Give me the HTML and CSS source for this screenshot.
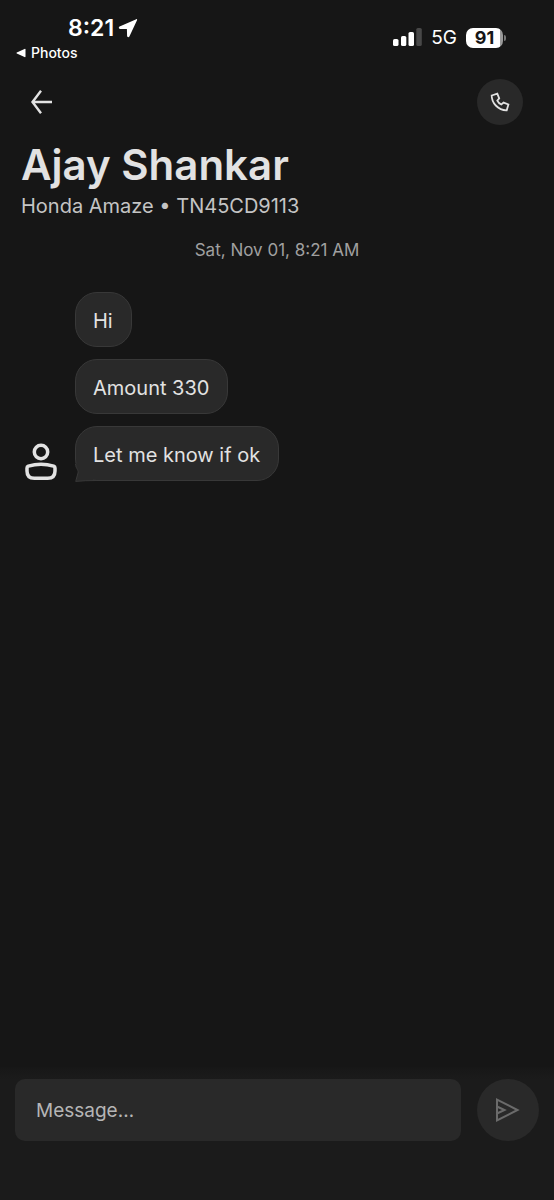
FILE: index.html
```html
<!DOCTYPE html>
<html lang="en">
<head>
<meta charset="utf-8">
<meta name="viewport" content="width=device-width, initial-scale=1">
<title>Ajay Shankar</title>
<link rel="stylesheet" href="styles.css">
</head>
<body>
<div class="app">
  <div class="status">
    <div class="status-left">
      <div class="clock">
        <span>8:21</span>
        <svg width="20" height="20" viewBox="0 0 20 20" aria-hidden="true"><path d="M18.300 1.200 1.600 8.500c-1.200.6-.9 2.300.4 2.400l6.900.2.200 6.900c.1 1.300 1.700 1.600 2.300.4L19 2.200c.3-.7 0-1.300-.7-1z" fill="#fff"/></svg>
      </div>
      <a class="back-app" href="#">
        <svg width="10" height="10" viewBox="0 0 10 10" aria-hidden="true"><path d="M.8 4.500 8.500.900q1-.400 1 .500v7.200q0 .900-1 .500L.8 5.500q-.8-.500 0-1z" fill="#fff"/></svg>
        <span>Photos</span>
      </a>
    </div>
    <div class="status-right">
      <svg width="30" height="20" viewBox="0 0 30 20" aria-hidden="true">
        <rect x="0" y="11" width="5.500" height="7" rx="1.600" fill="#fff"/>
        <rect x="8" y="8" width="5.300" height="10" rx="1.600" fill="#fff"/>
        <rect x="15.500" y="4" width="5.500" height="14" rx="1.600" fill="#fff"/>
        <rect x="23.300" y="0" width="5.500" height="18" rx="1.600" fill="#484848"/>
      </svg>
      <span class="network">5G</span>
      <span class="battery"><span class="charge">91</span></span>
    </div>
  </div>

  <header class="header">
    <div class="toolbar">
      <button class="icon-button" type="button" aria-label="Back">
        <svg width="24" height="26" viewBox="0 0 24 26" fill="none" stroke="#e2e2e2" stroke-width="2.400" aria-hidden="true"><path d="M22 13H2.500M11 1.800 2.500 13 11 24.200"/></svg>
      </button>
      <button class="icon-button call" type="button" aria-label="Call">
        <svg width="20" height="20" viewBox="0 0 20 20" fill="none" stroke="#e2e2e2" stroke-width="1.800" aria-hidden="true"><path d="M1.700 3.500 7.300 1.700l1.900 4.600-1.900 2.300c.8 1.700 2.200 3.100 4 3.900l2.300-1.900 4.800 1.900-1.700 5.800c-4 .1-7.900-1.700-10.900-4.800C3.200 10.800 1.700 7.300 1.700 3.500z"/></svg>
      </button>
    </div>
    <h1 class="name">Ajay Shankar</h1>
    <p class="vehicle">Honda Amaze • TN45CD9113</p>
  </header>

  <main class="thread">
    <time class="date">Sat, Nov 01, 8:21 AM</time>
    <div class="group">
      <svg class="avatar" width="32" height="38" viewBox="0 0 32 38" fill="none" stroke="#e2e2e2" stroke-width="3.500" aria-label="Driver" role="img"><circle cx="16" cy="9" r="6.700"/><path d="M2 25v3q0 7.300 7.300 7.300h13.400Q30 35.300 30 28v-3q0-1.300-1.300-1.800Q16 19.300 3.300 23.200 2 23.700 2 25z"/></svg>
      <div class="messages">
        <p class="bubble">Hi</p>
        <p class="bubble">Amount 330</p>
        <p class="bubble last">Let me know if ok
          <svg class="tail" width="24" height="18" viewBox="0 0 24 18" aria-hidden="true"><path d="M1 0C2 5 4 6 3 9L.700 17.400 18 16.500V0z" fill="#292929"/><path d="M.5 0C.8 5 4 6 3 9L.700 17.400Q9 16.500 22 16.500" fill="none" stroke="#383838"/></svg>
        </p>
      </div>
    </div>
  </main>

  <form class="composer">
    <input class="field" type="text" placeholder="Message…" aria-label="Message">
    <button class="send" type="button" aria-label="Send">
      <svg width="26" height="26" viewBox="0 0 26 26" fill="none" stroke="#6b6b6b" stroke-width="2" aria-hidden="true"><path d="M2 2.700 22.500 13 2 23.300zM2 9.500 9.500 13 2 16.500"/></svg>
    </button>
  </form>
</div>
</body>
</html>
```
FILE: styles.css
```css
* { box-sizing: border-box; }
body {
  margin: 0;
  background: #161616;
  color: #e2e2e2;
  font-family: "Inter", "Liberation Sans", sans-serif;
}
h1, p { margin: 0; }
button, input { font: inherit; border: 0; padding: 0; }
.app { min-height: 100vh; display: flex; flex-direction: column; }

.status {
  display: flex;
  justify-content: space-between;
  padding: 14px 48px 0 16px;
  color: #fff;
}
.clock {
  display: flex;
  align-items: center;
  gap: 4px;
  padding-left: 52px;
  font-size: 23px;
  line-height: 28px;
  font-weight: 600;
}
.back-app {
  display: flex;
  align-items: center;
  gap: 5px;
  font-size: 14px;
  line-height: 22px;
  font-weight: 500;
  color: inherit;
  text-decoration: none;
}
.status-right { display: flex; align-items: center; gap: 8px; height: 48px; }
.network { font-size: 19px; line-height: 24px; font-weight: 400; }
.battery { display: flex; align-items: center; gap: 1px; padding-left: 1px; }
.battery::after {
  content: "";
  width: 2px;
  height: 6px;
  border-radius: 0 2px 2px 0;
  background: #777;
}
.charge {
  width: 37px;
  border-radius: 7px;
  background: linear-gradient(90deg, #fff 91%, #999 91%);
  color: #161616;
  font-size: 18px;
  line-height: 20px;
  font-weight: 700;
  text-align: center;
}

.header { padding: 15px 20px 0 21px; }
.toolbar { display: flex; justify-content: space-between; padding-right: 11px; }
.icon-button {
  display: grid;
  place-items: center;
  width: 42px;
  height: 46px;
  background: none;
}
.call { width: 46px; border-radius: 50%; background: #292929; }
.name { margin-top: 14px; font-size: 42px; line-height: 52px; font-weight: 600; }
.vehicle { margin-top: 2px; font-size: 20px; line-height: 26px; font-weight: 400; color: #c4c4c4; }

.thread { flex: 1; display: flex; flex-direction: column; padding: 19px 25px; }
.date { text-align: center; font-size: 17px; line-height: 24px; color: #a0a0a0; }
.group { display: flex; align-items: flex-end; gap: 18px; margin-top: 30px; }
.messages { display: flex; flex-direction: column; align-items: flex-start; gap: 12px; }
.bubble {
  padding: 14px 18px 10px 17px;
  border: 1px solid #383838;
  border-radius: 22px;
  background: #292929;
  font-size: 20px;
  line-height: 29px;
}
.last { position: relative; }
.tail { position: absolute; left: -1px; bottom: -2px; }

.composer {
  display: flex;
  gap: 16px;
  padding: 12px 15px 59px;
  background: linear-gradient(#171717, #1b1b1b 12px);
}
.field {
  flex: 1;
  min-width: 0;
  height: 62px;
  padding: 0 21px;
  border-radius: 10px;
  background: #292929;
  color: #e2e2e2;
  font-size: 19px;
}
.field::placeholder { color: #b5b5b5; opacity: 1; }
.send {
  display: grid;
  place-items: center;
  width: 62px;
  height: 62px;
  border-radius: 50%;
  background: #292929;
}
```
